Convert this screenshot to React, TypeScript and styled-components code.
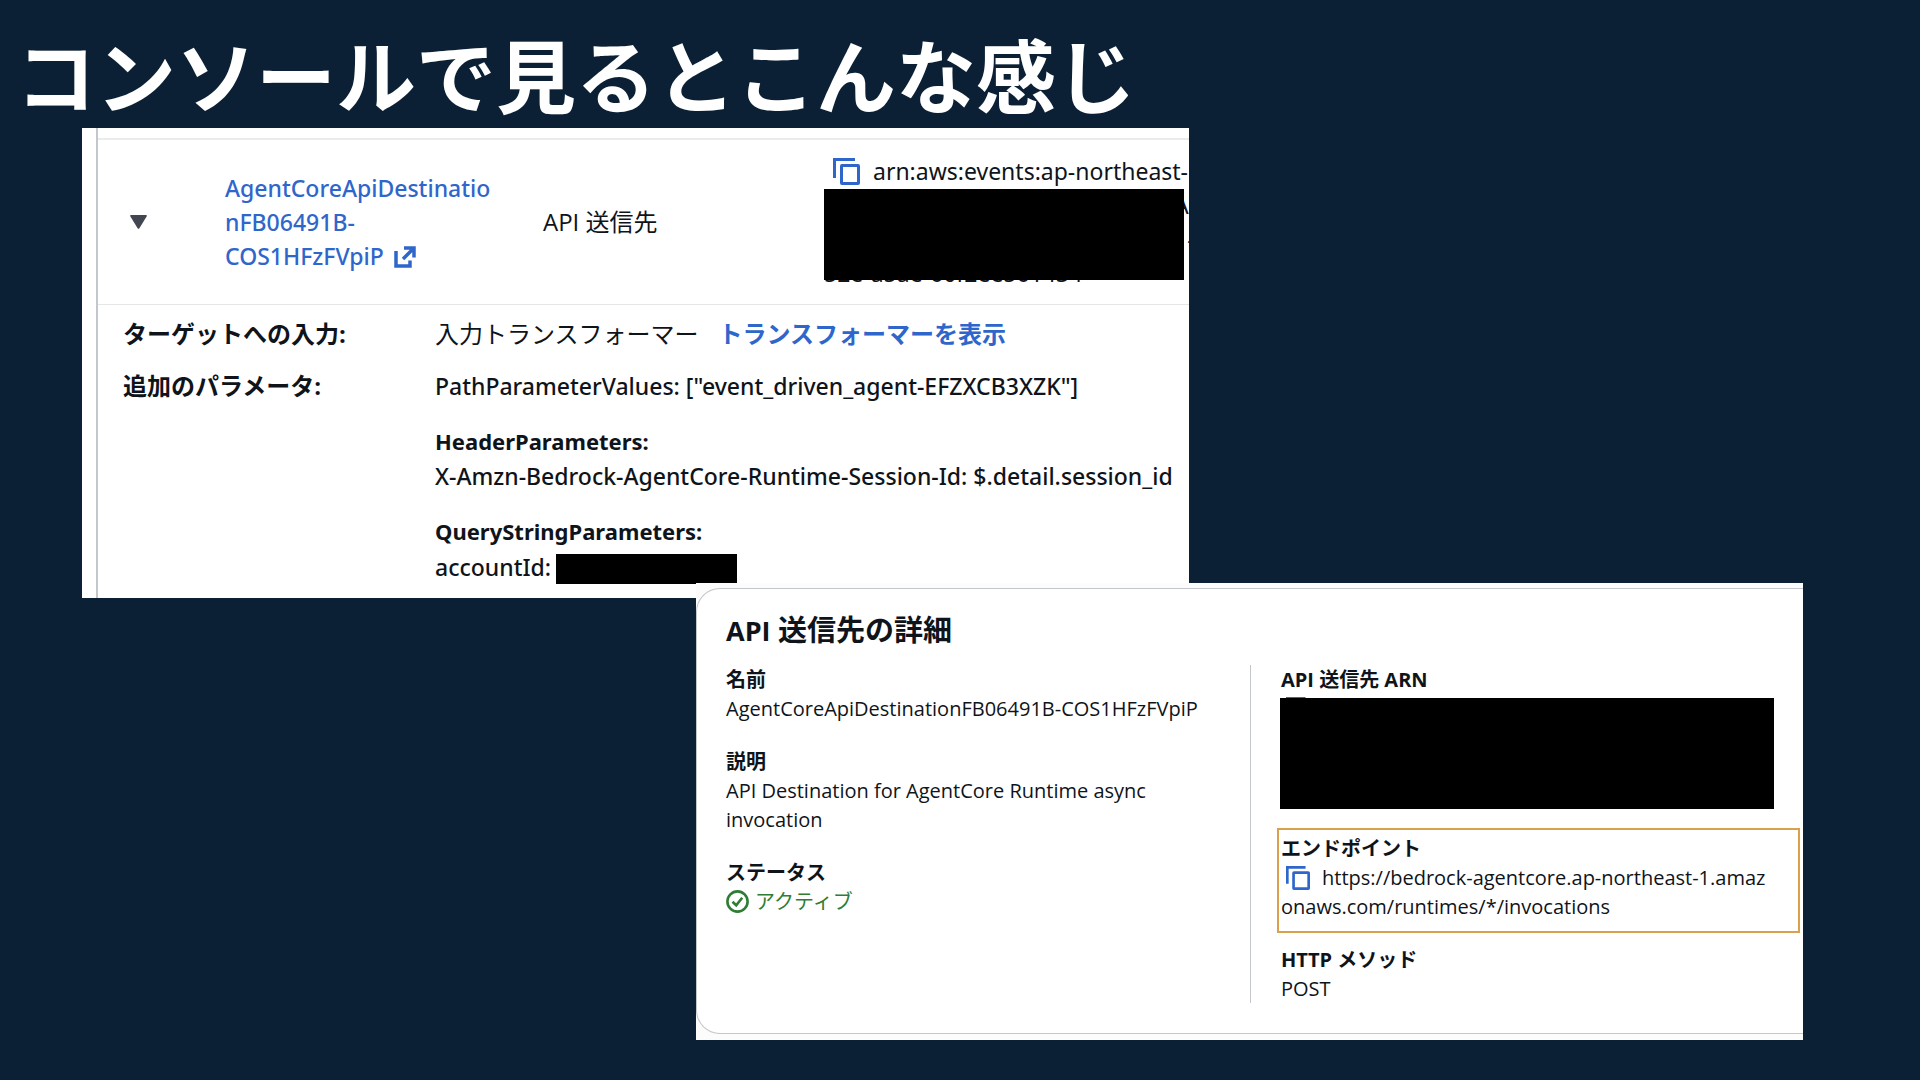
import React from "react";
import styled, { createGlobalStyle } from "styled-components";

const GlobalStyle = createGlobalStyle`
  *, *::before, *::after { box-sizing: border-box; }
  body { margin: 0; background: #0c2035; }
`;

const Slide = styled.main`
  min-height: 100vh;
  background: #0c2035;
  font-family: "Open Sans", "Noto Sans CJK JP", sans-serif;
  color: #0f141a;
`;

const Title = styled.h1`
  margin: 0;
  padding: 22px 16px 6px;
  font-family: "Noto Sans CJK JP", sans-serif;
  font-size: 80px;
  font-weight: 700;
  line-height: 100px;
  color: #fff;
`;

const Board = styled.div`
  display: grid;
  grid-template-columns:
    minmax(0, 82fr) minmax(0, 614fr) minmax(0, 493fr)
    minmax(0, 614fr) minmax(0, 117fr);
`;

const TargetPanel = styled.section`
  grid-column: 2 / 4;
  padding-left: 14px;
  background: #fff;
  overflow: hidden;
  font-size: 24px;
  line-height: 34px;
`;

const TargetBody = styled.div`
  padding-top: 10px;
  border-left: 2px solid #c3c6cb;
`;

const TargetRow = styled.div`
  display: grid;
  grid-template-columns:
    minmax(0, 127fr) minmax(0, 318fr) minmax(0, 281fr) minmax(0, 365fr);
  align-items: center;
  padding: 14px 0;
  border-top: 2px solid #e9ebed;
  border-bottom: 1px solid #e4e6e8;
`;

const Toggle = styled.button`
  display: flex;
  margin-left: 32px;
  padding: 0;
  border: 0;
  background: none;
  width: 17px;
  cursor: pointer;
`;

const NameLink = styled.a`
  font-family: "Noto Sans", "Noto Sans CJK JP", sans-serif;
  font-size: 23px;
  font-weight: 500;
  color: #2f66cc;
  text-decoration: none;
`;

const ExternalMark = styled.svg`
  margin-left: 10px;
  vertical-align: -3px;
`;

const ArnCell = styled.div`
  position: relative;
  font-family: "Noto Sans", "Noto Sans CJK JP", sans-serif;
  font-size: 23px;
  white-space: nowrap;
`;

const ArnLine = styled.div<{ $indent?: boolean }>`
  display: flex;
  align-items: center;
  height: 34px;
  padding-left: ${(p) => (p.$indent ? "350px" : "0")};
`;

const CopyButton = styled.button<{ $small?: boolean }>`
  display: inline-flex;
  flex: none;
  padding: 0;
  border: 0;
  background: none;
  color: #2f66cc;
  cursor: pointer;
  vertical-align: -5px;
  margin: ${(p) => (p.$small ? "0 12px 0 5px" : "0 13px 0 9px")};
`;

const ArnMask = styled.div`
  position: absolute;
  top: 35px;
  left: 0;
  right: 5px;
  height: 91px;
  background: #000;
`;

const Params = styled.dl`
  display: grid;
  grid-template-columns: minmax(0, 312fr) minmax(0, 754fr);
  row-gap: 18px;
  margin: 0;
  padding: 12px 0 14px 25px;
`;

const ParamLabel = styled.dt`
  font-weight: 700;
`;

const ParamValue = styled.dd`
  display: flex;
  flex-direction: column;
  gap: 21px;
  margin: 0;
  white-space: nowrap;
`;

const InlineRow = styled.div`
  display: flex;
  align-items: center;
  gap: 20px;
`;

const ShowLink = styled.a`
  font-weight: 700;
  color: #2f66cc;
  text-decoration: none;
`;

const ParamText = styled.div`
  font-family: "Noto Sans", "Noto Sans CJK JP", sans-serif;
  font-size: 23px;
  font-weight: 500;
`;

const ParamName = styled.strong`
  display: block;
  height: 35px;
  font-size: 22px;
`;

const AccountLine = styled.div`
  display: flex;
  align-items: center;
  gap: 5px;
  height: 35px;
`;

const AccountMask = styled.span`
  align-self: flex-end;
  width: 181px;
  height: 30px;
  background: #000;
`;

const DetailPanel = styled.section`
  grid-column: 3 / 5;
  margin-top: -15px;
  padding: 5px 0 6px;
  background: #fcfcfc;
  position: relative;
  overflow: hidden;
  font-size: 20px;
  line-height: 29px;
`;

const DetailCard = styled.div`
  padding: 23px 0 30px 29px;
  border: 1px solid #c3c6cb;
  border-right: 0;
  border-radius: 24px 0 0 24px;
  background: #fff;
`;

const DetailHeading = styled.h2`
  margin: 0 0 16px;
  font-size: 29px;
  font-weight: 700;
  line-height: 36px;
`;

const HeadingLatin = styled.span`
  font-size: 27px;
`;

const DetailColumns = styled.div`
  display: grid;
  grid-template-columns: minmax(0, 524fr) minmax(0, 553fr);
`;

const FieldList = styled.dl<{ $divided?: boolean }>`
  display: flex;
  flex-direction: column;
  gap: 24px;
  margin: 0;
  padding-left: ${(p) => (p.$divided ? "30px" : "0")};
  border-left: ${(p) => (p.$divided ? "1px solid #c3c6cb" : "0")};
`;

const Field = styled.div<{ $marked?: boolean }>`
  position: relative;
  ${(p) =>
    p.$marked &&
    `&::after {
      content: "";
      position: absolute;
      inset: -6px 3px -12px -4px;
      border: 2px solid #d9a04e;
      pointer-events: none;
    }`}
`;

const FieldLabel = styled.dt`
  font-weight: 700;
  height: 29px;
`;

const FieldValue = styled.dd`
  margin: 0;
`;

const UrlLine = styled.div`
  display: flex;
  align-items: center;
  height: 29px;
  white-space: nowrap;
`;

const HiddenValue = styled.dd`
  position: relative;
  height: 116px;
  margin: 0;
`;

const ValueMask = styled.div`
  position: absolute;
  top: 4px;
  left: -1px;
  right: 29px;
  height: 111px;
  background: #000;
`;

const Status = styled.dd`
  display: flex;
  align-items: center;
  gap: 6px;
  height: 29px;
  margin: 0;
  color: #2f7d35;
`;

const CopyIcon = ({ size }: { size: number }) => (
  <svg width={size} height={size} viewBox="0 0 27 27" fill="none" stroke="currentColor" strokeWidth="3">
    <path d="M22 1.5H1.5V20" />
    <rect x="8.5" y="7.5" width="17" height="18" rx="0.5" />
  </svg>
);

export default function App() {
  return (
    <>
      <GlobalStyle />
      <Slide lang="ja">
        <Title>コンソールで見るとこんな感じ</Title>
        <Board>
          <TargetPanel>
            <TargetBody>
              <TargetRow>
                <Toggle type="button" aria-label="詳細を閉じる" aria-expanded="true">
                  <svg width="17" height="14" viewBox="0 0 17 14" fill="#424650">
                    <path d="M1 0H16Q17.4 0 16.6 1.4L9.4 13.2Q8.5 14.4 7.6 13.2L.4 1.4Q-.4 0 1 0Z" />
                  </svg>
                </Toggle>
                <div>
                  <NameLink href="#destination">
                    AgentCoreApiDestinatio
                    <br />
                    nFB06491B-
                    <br />
                    COS1HFzFVpiP
                    <ExternalMark width="22" height="22" viewBox="0 0 22 22" fill="none" stroke="currentColor" strokeWidth="3.500">
                      <path d="M2 5V20H16V14.500" />
                      <path d="M10 2H20V11.500M19.500 2.500L9 13" />
                    </ExternalMark>
                  </NameLink>
                </div>
                <div>API 送信先</div>
                <ArnCell>
                  <ArnLine>
                    <CopyButton type="button" aria-label="ARN をコピー">
                      <CopyIcon size={27} />
                    </CopyButton>
                    arn:aws:events:ap-northeast-
                  </ArnLine>
                  <ArnLine $indent>A</ArnLine>
                  <ArnLine $indent>1-</ArnLine>
                  <ArnLine>52e-a5ae-60f2ee561434</ArnLine>
                  <ArnMask />
                </ArnCell>
              </TargetRow>
              <Params>
                <ParamLabel>ターゲットへの入力:</ParamLabel>
                <ParamValue>
                  <InlineRow>
                    <span>入力トランスフォーマー</span>
                    <ShowLink href="#transformer">トランスフォーマーを表示</ShowLink>
                  </InlineRow>
                </ParamValue>
                <ParamLabel>追加のパラメータ:</ParamLabel>
                <ParamValue>
                  <ParamText>PathParameterValues: ["event_driven_agent-EFZXCB3XZK"]</ParamText>
                  <ParamText>
                    <ParamName>HeaderParameters:</ParamName>
                    X-Amzn-Bedrock-AgentCore-Runtime-Session-Id: $.detail.session_id
                  </ParamText>
                  <ParamText>
                    <ParamName>QueryStringParameters:</ParamName>
                    <AccountLine>
                      accountId: <AccountMask />
                    </AccountLine>
                  </ParamText>
                </ParamValue>
              </Params>
            </TargetBody>
          </TargetPanel>

          <DetailPanel>
            <DetailCard>
              <DetailHeading>
                <HeadingLatin>API</HeadingLatin> 送信先の詳細
              </DetailHeading>
              <DetailColumns>
                <FieldList>
                  <Field>
                    <FieldLabel>名前</FieldLabel>
                    <FieldValue>AgentCoreApiDestinationFB06491B-COS1HFzFVpiP</FieldValue>
                  </Field>
                  <Field>
                    <FieldLabel>説明</FieldLabel>
                    <FieldValue>
                      API Destination for AgentCore Runtime async
                      <br />
                      invocation
                    </FieldValue>
                  </Field>
                  <Field>
                    <FieldLabel>ステータス</FieldLabel>
                    <Status>
                      <svg width="23" height="23" viewBox="0 0 23 23" fill="none" stroke="currentColor" strokeWidth="2.600">
                        <circle cx="11.5" cy="11.5" r="10.100" />
                        <path d="M6.500 11.800L10.200 15.300L16.200 7.800" />
                      </svg>
                      アクティブ
                    </Status>
                  </Field>
                </FieldList>
                <FieldList $divided>
                  <Field>
                    <FieldLabel>API 送信先 ARN</FieldLabel>
                    <HiddenValue>
                      <CopyButton type="button" $small aria-label="ARN をコピー">
                        <CopyIcon size={24} />
                      </CopyButton>
                      <ValueMask />
                    </HiddenValue>
                  </Field>
                  <Field $marked>
                    <FieldLabel>エンドポイント</FieldLabel>
                    <FieldValue>
                      <UrlLine>
                        <CopyButton type="button" $small aria-label="エンドポイントをコピー">
                          <CopyIcon size={24} />
                        </CopyButton>
                        https://bedrock-agentcore.ap-northeast-1.amaz
                      </UrlLine>
                      <UrlLine>onaws.com/runtimes/*/invocations</UrlLine>
                    </FieldValue>
                  </Field>
                  <Field>
                    <FieldLabel>HTTP メソッド</FieldLabel>
                    <FieldValue>POST</FieldValue>
                  </Field>
                </FieldList>
              </DetailColumns>
            </DetailCard>
          </DetailPanel>
        </Board>
      </Slide>
    </>
  );
}
